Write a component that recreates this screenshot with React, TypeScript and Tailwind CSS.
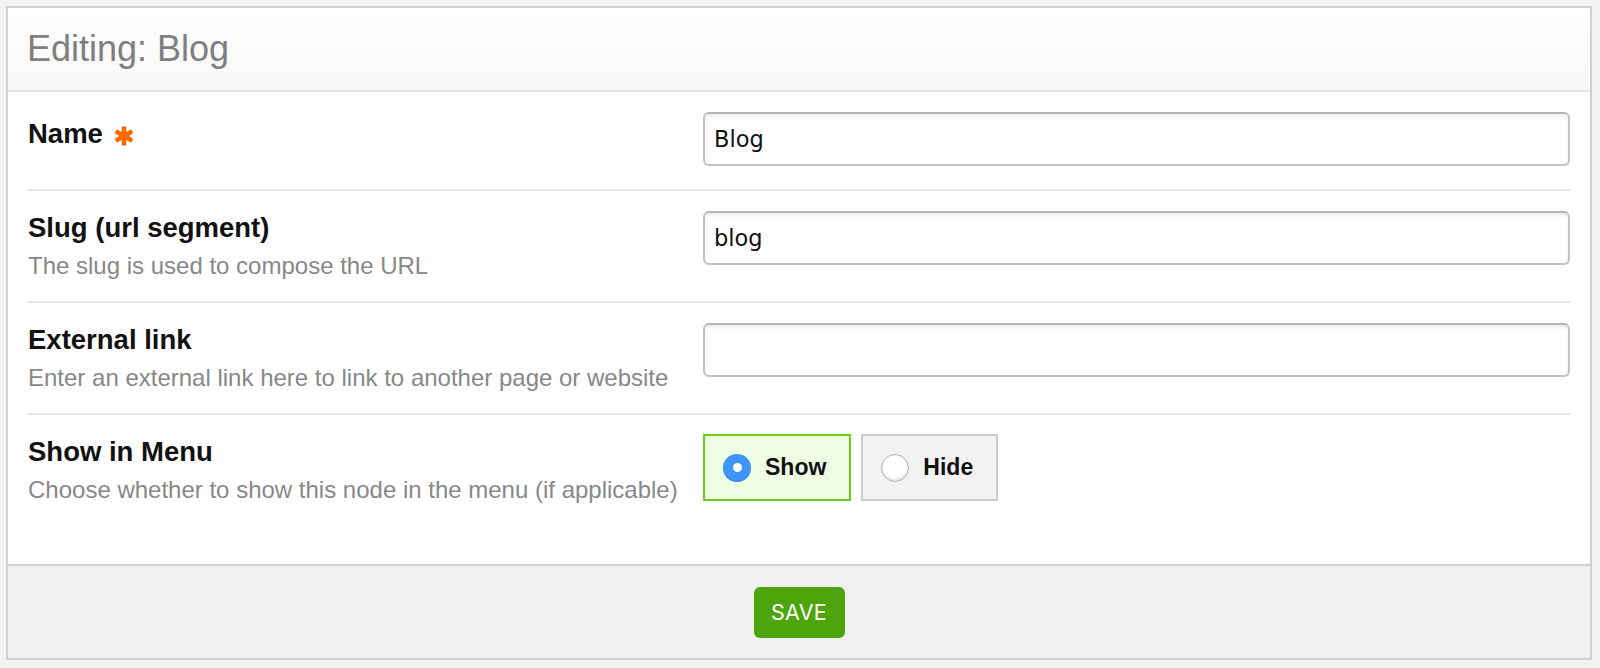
import { useState } from "react";

const sans = "font-['Liberation_Sans',Arial,Helvetica,sans-serif]";

function Asterisk() {
  return (
    <svg viewBox="0 0 20 20" className="w-[20px] h-[20px] shrink-0 ml-[11px] mt-[9px]">
      <g stroke="#ff6a00" strokeWidth="4.6" strokeLinecap="butt">
        <line x1="10" y1="0.5" x2="10" y2="19.5" />
        <line x1="1.8" y1="5.25" x2="18.2" y2="14.75" />
        <line x1="1.8" y1="14.75" x2="18.2" y2="5.25" />
      </g>
    </svg>
  );
}

function TextInput({ value }: { value: string }) {
  const [v, setV] = useState(value);
  return (
    <input
      value={v}
      onChange={(e) => setV(e.target.value)}
      className="w-full h-[54px] rounded-[6px] border-2 border-[#c2c2c2] border-t-[#b4b4b4] bg-white pl-[9px] pr-3 text-[22.5px] text-[#111] font-['DejaVu_Sans',sans-serif] shadow-[inset_0_2px_4px_rgba(0,0,0,0.08)] outline-none"
    />
  );
}

function Row({
  label,
  desc,
  required,
  last,
  height,
  children,
}: {
  label: string;
  desc?: string;
  required?: boolean;
  last?: boolean;
  height: string;
  children: React.ReactNode;
}) {
  return (
    <div className={`grid grid-cols-[675px_1fr] pt-5 ${height} ${last ? "" : "border-b-2 border-[#e6e6e6]"}`}>
      <div>
        <div className={`flex items-start text-[27.5px] leading-[33px] font-bold text-[#111] ${required ? "mt-[5px]" : ""}`}>
          {label}
          {required && <Asterisk />}
        </div>
        {desc && <div className="mt-[4px] text-[24px] leading-[36px] text-[#888888]">{desc}</div>}
      </div>
      <div>{children}</div>
    </div>
  );
}

function RadioOption({ label, checked, onClick }: { label: string; checked: boolean; onClick: () => void }) {
  return (
    <button
      onClick={onClick}
      className={`flex items-center h-[67px] pl-[18px] pr-[23px] border-2 ${
        checked ? "border-[#66cf1c] bg-[#edfce3]" : "border-[#cccccc] bg-[#f2f2f2]"
      }`}
    >
      {checked ? (
        <span className="w-[28px] h-[28px] rounded-full bg-[#3d96f7] flex items-center justify-center shadow-[inset_0_-1px_2px_rgba(0,0,0,0.15)]">
          <span className="w-[9px] h-[9px] rounded-full bg-white" />
        </span>
      ) : (
        <span className="w-[28px] h-[28px] rounded-full bg-white border border-[#b0b0b0] shadow-[inset_0_-2px_3px_rgba(0,0,0,0.12)]" />
      )}
      <span className="ml-[14px] text-[23px] font-bold text-[#111]">{label}</span>
    </button>
  );
}

export default function App() {
  const [show, setShow] = useState(true);

  return (
    <div className={`min-h-[668px] bg-[#f3f3f3] pt-[6px] pl-[6px] ${sans}`}>
      <div className="w-[1586px] border-2 border-[#d0d0d0] bg-white">
        {/* header */}
        <div className="h-[84px] flex items-center pl-[19px] border-b-2 border-[#e5e5e5] bg-gradient-to-b from-white to-[#f7f7f7]">
          <h1 className="text-[36px] text-[#7f7f7f]">Editing: Blog</h1>
        </div>

        {/* fields */}
        <div className="px-5">
          <Row label="Name" required height="h-[99px]">
            <TextInput value="Blog" />
          </Row>
          <Row label="Slug (url segment)" desc="The slug is used to compose the URL" height="h-[112px]">
            <TextInput value="blog" />
          </Row>
          <Row label="External link" desc="Enter an external link here to link to another page or website" height="h-[112px]">
            <TextInput value="" />
          </Row>
          <Row label="Show in Menu" desc="Choose whether to show this node in the menu (if applicable)" last height="h-[149px]">
            <div className="flex gap-[10px] -mt-[1px]">
              <RadioOption label="Show" checked={show} onClick={() => setShow(true)} />
              <RadioOption label="Hide" checked={!show} onClick={() => setShow(false)} />
            </div>
          </Row>
        </div>

        {/* footer */}
        <div className="h-[94px] border-t-2 border-[#d0d0d0] bg-[#f0f0f0] flex items-center justify-center">
          <button className="w-[91px] h-[51px] rounded-[6px] bg-[#4ea50b] text-white text-[21.5px] font-['Inter',sans-serif] tracking-[0.3px]">
            SAVE
          </button>
        </div>
      </div>
    </div>
  );
}
